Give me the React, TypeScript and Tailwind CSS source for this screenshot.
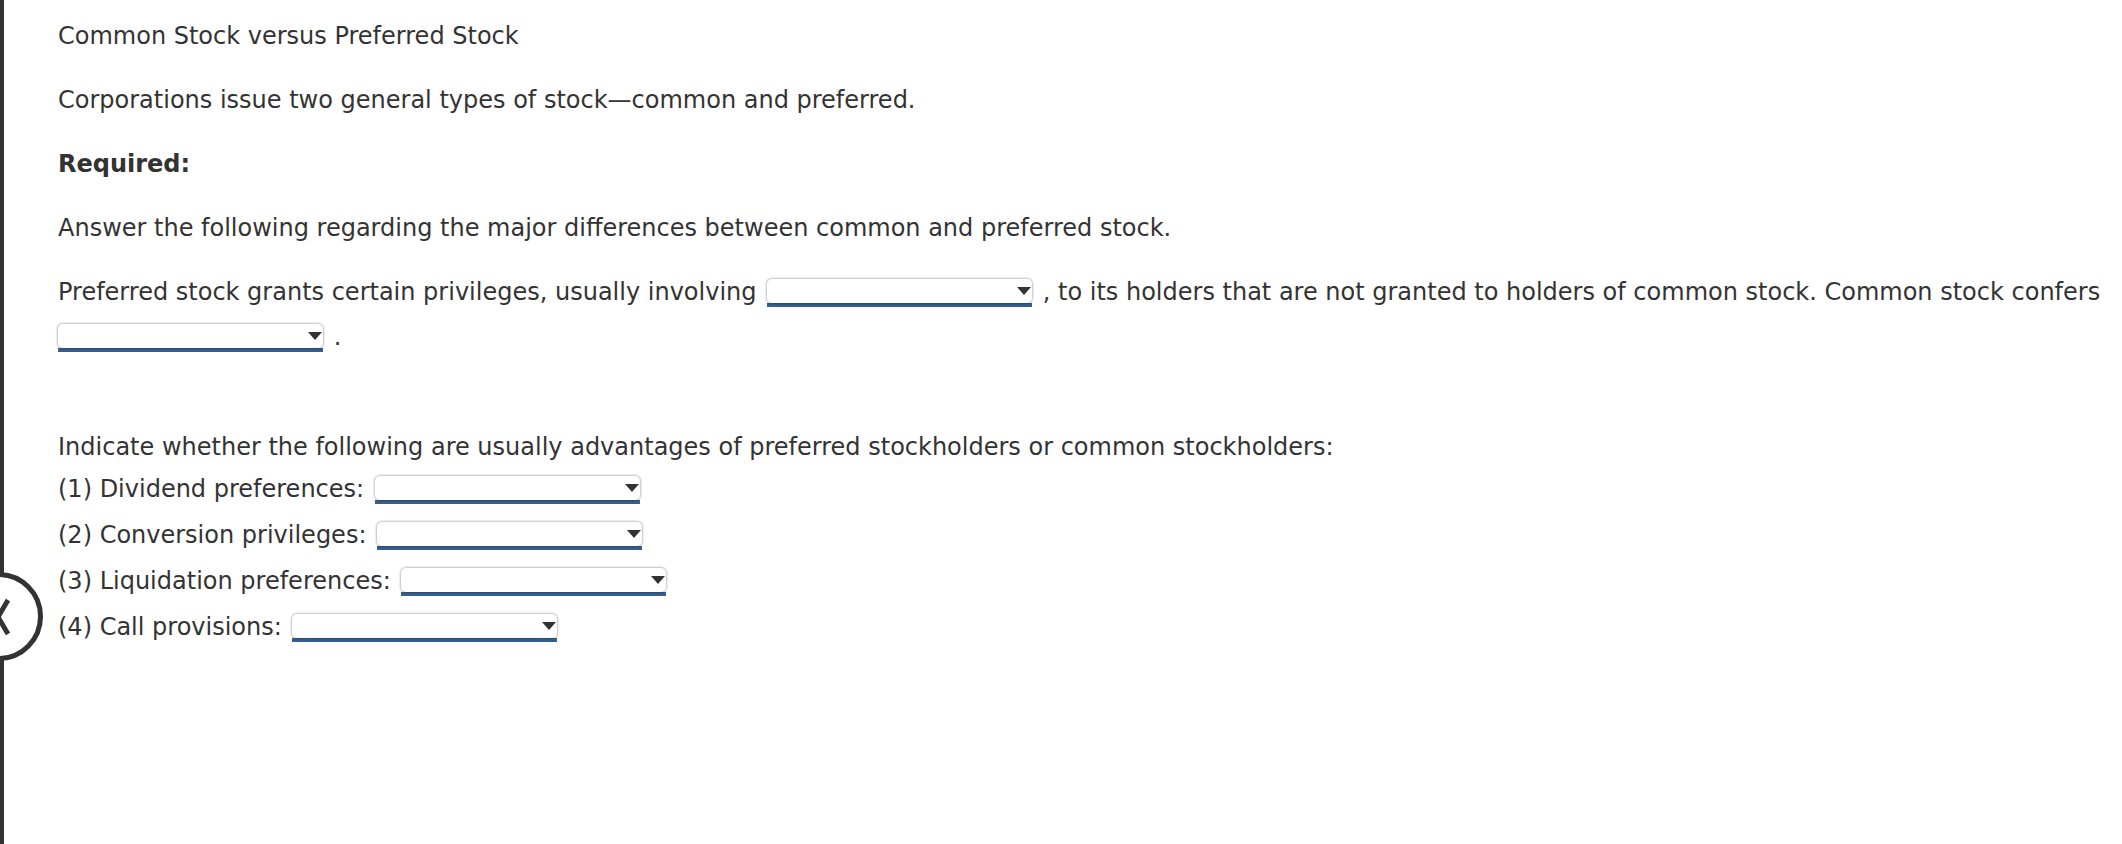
import React from 'react';

const Dropdown: React.FC = () => (
    <span className="inline-flex flex-col w-[265px] align-middle mx-[3px]">
        <span className="relative h-[24px] bg-white rounded-[5px] shadow-[0_0_2px_1px_rgba(0,0,0,0.25)]">
            <span className="absolute right-[1px] top-[8px] w-0 h-0 border-l-[7px] border-r-[7px] border-t-[8px] border-l-transparent border-r-transparent border-t-[#333333]" />
        </span>
        <span className="h-[4px] bg-[#365f8d]" />
    </span>
);

const rows = [
    '(1) Dividend preferences:',
    '(2) Conversion privileges:',
    '(3) Liquidation preferences:',
    '(4) Call provisions:',
];

export default function App() {
    return (
        <div className="relative min-h-[844px] bg-white overflow-hidden text-[#333333] text-[24px] font-['DejaVu_Sans',Verdana,sans-serif]">
            {/* left rail with collapse button */}
            <div className="absolute left-0 top-0 bottom-0 w-[4px] bg-[#333333]" />
            <div className="absolute left-[-46px] top-[572px] w-[89px] h-[89px] rounded-full bg-white border-[5px] border-[#333333] flex items-center justify-end pr-[30px]">
                <svg width="14" height="40" viewBox="0 0 14 40" className="mr-[-2px]">
                    <path d="M12 3 L2 20 L12 37" fill="none" stroke="#333333" strokeWidth="5" />
                </svg>
            </div>

            <div className="pl-[58px] pt-[14px] leading-[45px]">
                <p className="mb-[19px]">Common Stock versus Preferred Stock</p>
                <p className="mb-[19px]">Corporations issue two general types of stock—common and preferred.</p>
                <p className="mb-[19px] font-bold">Required:</p>
                <p className="mb-[19px]">Answer the following regarding the major differences between common and preferred stock.</p>
                <p className="mb-[19px] whitespace-nowrap">
                    Preferred stock grants certain privileges, usually involving <Dropdown /> , to its holders that are not granted to holders of common stock. Common stock confers
                    <br />
                    <span className="ml-[-3px]"><Dropdown /></span> .
                </p>
                <div className="h-[50px]" />
                <p className="leading-[37px]">Indicate whether the following are usually advantages of preferred stockholders or common stockholders:</p>
                {rows.map(r => (
                    <p key={r} className="leading-[46px] whitespace-nowrap">
                        {r} <Dropdown />
                    </p>
                ))}
            </div>
        </div>
    );
}
